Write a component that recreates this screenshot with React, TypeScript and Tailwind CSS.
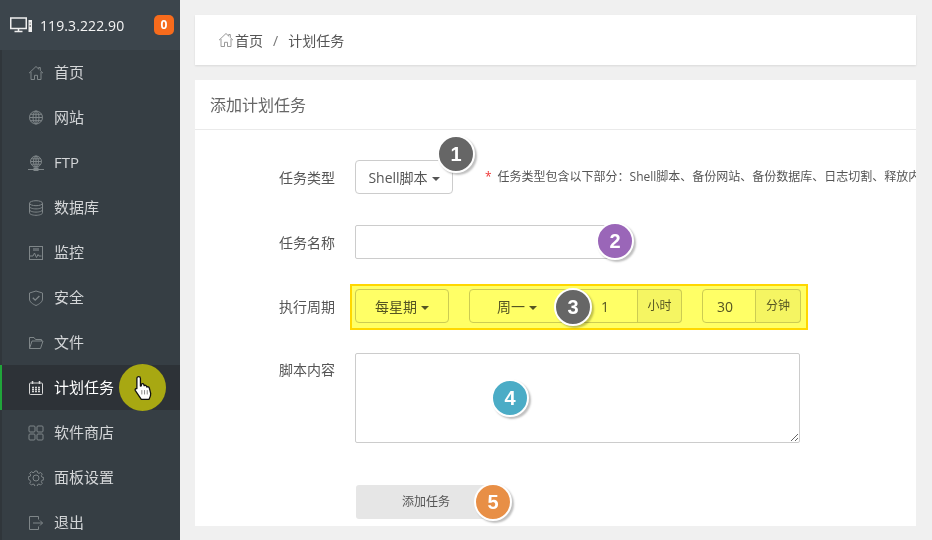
import React from "react";

const S = ({ children }: { children: React.ReactNode }) => (
  <svg width="16" height="16" viewBox="0 0 16 16" fill="none" stroke="currentColor" strokeWidth="1" className="shrink-0">
    {children}
  </svg>
);

const Globe = () => (
  <>
    <circle cx="8" cy="7.5" r="6.5" />
    <ellipse cx="8" cy="7.5" rx="3" ry="6.5" />
    <path d="M8 1v13M1.5 7.5h13M2.5 4.3h11M2.5 10.7h11" />
  </>
);

const icons: Record<string, React.ReactNode> = {
  home: (
    <path d="M1 8.2 8 1.5l2.7 2.6V2.5h1.6v3.1L15 8.2M3 7v7.5h3.5v-4.2h3v4.2H13V7" />
  ),
  globe: <Globe />,
  ftp: (
    <>
      <circle cx="8" cy="6.5" r="5.5" />
      <ellipse cx="8" cy="6.5" rx="2.5" ry="5.5" />
      <path d="M8 1v11M2.5 6.5h11M3.3 3.8h9.4M3.3 9.2h9.4M0 14.5h16" />
      <rect x="6" y="13" width="4" height="2.5" fill="currentColor" />
    </>
  ),
  db: (
    <>
      <ellipse cx="8" cy="3.2" rx="6.5" ry="2.5" />
      <path d="M1.5 3.2v9.6c0 1.4 2.9 2.5 6.5 2.5s6.5-1.1 6.5-2.5V3.2M1.5 6.4c0 1.4 2.9 2.5 6.5 2.5s6.5-1.1 6.5-2.5M1.5 9.6c0 1.4 2.9 2.5 6.5 2.5s6.5-1.1 6.5-2.5" />
    </>
  ),
  mon: (
    <>
      <rect x="1.5" y="1.5" width="13" height="13" />
      <rect x="5" y="3" width="6" height="3" fill="currentColor" stroke="none" opacity="0.6" />
      <path d="M2 11h3l1.5-3 2 4.5 1.5-3 1 1.5h2.5" />
    </>
  ),
  shield: (
    <>
      <path d="M8 1 14.5 3v6c0 3-3 5-6.5 6.500C4.500 14 1.500 12 1.500 9V3Z" />
      <path d="m4.800 7.800 2.400 2.400 4.200-4.200" strokeWidth="1.300" />
    </>
  ),
  folder: (
    <path d="M1.500 13.500V2.500h4.500l1.500 2h6v1.500M1.500 13.500h11l2.500-7.500H4l-2.500 7.500Z" />
  ),
  cal: (
    <>
      <rect x="1.500" y="3" width="13" height="11.500" rx="1" />
      <path d="M4.500 1v3M11.500 1v3" strokeWidth="1.500" />
      <path d="M4 7.500h8M4 9.500h8M4 11.500h8" strokeWidth="1.300" strokeDasharray="2 1" />
    </>
  ),
  grid: (
    <>
      <rect x="1" y="1" width="6" height="6" rx="1" />
      <rect x="9" y="1" width="6" height="6" rx="1" />
      <rect x="1" y="9" width="6" height="6" rx="1" />
      <rect x="9" y="9" width="6" height="6" rx="1" />
    </>
  ),
  gear: (
    <>
      <circle cx="8" cy="8" r="3" />
      <path d="m6.800 1h2.400l.4 1.800 1.400.6 1.600-1 1.700 1.700-1 1.600.6 1.400 1.800.4v2.400l-1.800.4-.6 1.400 1 1.600-1.700 1.700-1.600-1-1.400.6-.4 1.800H6.800l-.4-1.800-1.400-.6-1.600 1-1.700-1.700 1-1.600-.6-1.400L.3 9.200V6.800l1.800-.4.6-1.400-1-1.600 1.700-1.700 1.600 1 1.400-.6Z" />
    </>
  ),
  exit: (
    <>
      <path d="M10.500 4.500V1.500h-9v13h9v-3" />
      <path d="M5 8h9.500M12 5.500 14.500 8 12 10.500" />
    </>
  ),
};

const menu: [string, string][] = [
  ["home", "首页"],
  ["globe", "网站"],
  ["ftp", "FTP"],
  ["db", "数据库"],
  ["mon", "监控"],
  ["shield", "安全"],
  ["folder", "文件"],
  ["cal", "计划任务"],
  ["grid", "软件商店"],
  ["gear", "面板设置"],
  ["exit", "退出"],
];

const Caret = () => (
  <span className="ml-1 inline-block w-0 h-0 align-middle border-x-4 border-x-transparent border-t-4 border-t-current" />
);

const Badge = ({ n, color, className }: { n: number; color: string; className: string }) => (
  <span
    className={`absolute w-[38px] h-[38px] rounded-full flex items-center justify-center text-white font-bold text-[20px] leading-none border-[2px] border-white shadow-[2px_2px_2px_rgba(0,0,0,0.25)] ${color} ${className}`}
    style={{ fontFamily: "'Liberation Sans', sans-serif" }}
  >
    {n}
  </span>
);

const Label = ({ children }: { children: React.ReactNode }) => (
  <label className="w-[140px] shrink-0 text-right text-[14px] text-[#555]">{children}</label>
);

export default function App() {
  return (
    <div
      className="w-[932px] h-[540px] overflow-hidden flex bg-[#f0f0f0] text-[#555] relative"
      style={{ fontFamily: "'Open Sans', 'Noto Sans CJK SC', sans-serif" }}
    >
      <aside className="w-[180px] h-full shrink-0 bg-[#363e44] shadow-[inset_2px_0_0_#30363b] flex flex-col overflow-hidden">
        <div className="h-[50px] shrink-0 bg-[#3c454c] flex items-center pl-[10px] pr-[6px] text-white">
          <svg width="23" height="17" viewBox="0 0 23 17" fill="none" stroke="#eee" className="shrink-0">
            <rect x="0.750" y="1" width="15.500" height="10.500" strokeWidth="1.500" />
            <path d="M8.500 12v2M4.500 14.500h8" strokeWidth="1.500" />
            <rect x="18.500" y="3" width="3.500" height="12" fill="#eee" stroke="none" />
            <path d="M20.200 5.500v1M20.200 8v2" stroke="#555" />
          </svg>
          <span className="ml-[7px] text-[14px] tracking-[0.1px] text-[#f4f4f4]">119.3.222.90</span>
          <span className="ml-auto w-5 h-5 rounded-[5px] bg-[#f76b1c] text-white text-[12px] font-bold flex items-center justify-center">
            0
          </span>
        </div>
        {menu.map(([k, t]) => {
          const active = k === "cal";
          return (
            <div
              key={k}
              className={`h-[45px] shrink-0 flex items-center ${
                active ? "bg-[#2d3237] border-l-2 border-l-[#20a53a] pl-[26px] text-white" : "pl-[28px] text-[#d4d6d8]"
              }`}
            >
              <span className={active ? "text-[#d8d8d8]" : "text-[#7f8689]"}>
                <S>{icons[k]}</S>
              </span>
              <span className="ml-[10px] text-[15px] -mt-[1px]">{t}</span>
            </div>
          );
        })}
      </aside>

      <main className="flex-1 pl-[15px] pr-4 pt-[15px] flex flex-col gap-[15px] min-w-0">
        <div className="h-[50px] shrink-0 bg-white shadow-[0_1px_2px_rgba(0,0,0,0.1)] flex items-center pl-[23px] text-[14px]">
          <span className="text-[#999] -mt-[1px]">
            <svg width="16" height="16" viewBox="0 0 16 16" fill="none" stroke="currentColor">
              <path d="M1 8.200 8 1.500l2.700 2.600V2.500h1.600v3.100L15 8.200M3 7v7.500h3.500v-4.200h3v4.200H13V7" />
            </svg>
          </span>
          <span className="ml-px text-[#555]">首页</span>
          <span className="mx-[10px] text-[#777]">/</span>
          <span className="text-[#555]">计划任务</span>
        </div>

        <div className="h-[446px] shrink-0 bg-white relative overflow-hidden">
          <div className="h-[50px] border-b border-[#eaeaea] flex items-center pl-[15px] text-[16px] text-[#666]">
            添加计划任务
          </div>

          <div className="flex flex-col">
            <div className="flex items-center gap-5 mt-[30px] h-[34px]">
              <Label>任务类型</Label>
              <button className="w-[98px] h-[34px] shrink-0 border border-[#ccc] rounded-[4px] text-[14px] text-[#555] bg-white">
                Shell脚本
                <Caret />
              </button>
              <span className="ml-3 whitespace-nowrap text-[12px] text-[#555]">
                <span className="text-[#e33] mr-[6px]">*</span>
                任务类型包含以下部分：Shell脚本、备份网站、备份数据库、日志切割、释放内
              </span>
            </div>

            <div className="flex items-center gap-5 mt-[31px] h-[34px]">
              <Label>任务名称</Label>
              <input className="w-[260px] h-[34px] border border-[#ccc] rounded-[2px] bg-white" />
            </div>

            <div className="flex items-center gap-5 mt-[30px] h-[34px]">
              <Label>执行周期</Label>
              <div className="flex items-center text-[14px] text-[#555]">
                <button className="w-[94px] h-[34px] border border-[#ccc] rounded-[4px] bg-white">
                  每星期
                  <Caret />
                </button>
                <button className="ml-5 w-[96px] h-[34px] border border-[#ccc] rounded-l-[4px] bg-white">
                  周一
                  <Caret />
                </button>
                <div className="w-[73px] h-[34px] border border-[#ccc] border-l-0 bg-white flex items-center justify-center pl-2">
                  1
                </div>
                <div className="w-[44px] h-[34px] border border-[#ccc] border-l-0 rounded-r-[4px] bg-[#f5f5f5] flex items-center justify-center text-[12px]">
                  小时
                </div>
                <div className="ml-5 w-[54px] h-[34px] border border-[#ccc] rounded-l-[4px] bg-white flex items-center justify-center pr-2">
                  30
                </div>
                <div className="w-[45px] h-[34px] border border-[#ccc] border-l-0 rounded-r-[4px] bg-[#f5f5f5] flex items-center justify-center text-[12px]">
                  分钟
                </div>
              </div>
            </div>

            <div className="flex items-start gap-5 mt-[30px]">
              <label className="w-[140px] shrink-0 text-right text-[14px] text-[#555] pt-[6px]">脚本内容</label>
              <textarea className="w-[445px] h-[90px] border border-[#ccc] rounded-[2px] bg-white block" />
            </div>

            <div className="ml-[161px] mt-[42px]">
              <button className="w-[135px] h-[34px] rounded-[3px] bg-[#e6e6e6] text-[12px] text-[#555] pl-[5px]">
                添加任务
              </button>
            </div>
          </div>

          {/* yellow highlight laid over the schedule row */}
          <div className="absolute left-[155px] top-[204px] w-[458px] h-[46px] border-2 border-[#ffd700] bg-[#ffff66] mix-blend-multiply" />

          <Badge n={1} color="bg-[#666666]" className="left-[242px] top-[55px]" />
          <Badge n={2} color="bg-[#9a66b8]" className="left-[401px] top-[142px]" />
          <Badge n={3} color="bg-[#666666]" className="left-[359px] top-[208px]" />
          <Badge n={4} color="bg-[#4bacc6]" className="left-[296px] top-[299px]" />
          <Badge n={5} color="bg-[#e88f46]" className="left-[279px] top-[403px]" />
        </div>
      </main>

      {/* click marker on the active menu row */}
      <div className="absolute left-[119px] top-[364px] w-[47px] h-[47px] rounded-full bg-[#a8a812] flex items-center justify-center">
        <svg width="22" height="27" viewBox="0 0 20 25" className="ml-[3px] mt-[1px]">
          <path
            d="M5 1.500c1 0 1.700.7 1.700 1.700v7l.8-.2V8.500c1-.8 2-.5 2.400.4l.2 1c.9-.7 1.900-.4 2.300.5l.2.700c1-.5 2-.1 2.300.9l1.300 5c.2 2-.4 3.500-1.500 5.500H7.500L2 14.500c-.6-1 .1-2.200 1.300-2l.1.100V3.200c0-1 .7-1.700 1.600-1.700Z"
            fill="#fff"
            stroke="#111"
            strokeWidth="1.200"
            strokeLinejoin="round"
          />
          <path d="M8 14v4M10.500 14v4M13 14v4" stroke="#777" strokeWidth="0.800" />
        </svg>
      </div>
    </div>
  );
}
